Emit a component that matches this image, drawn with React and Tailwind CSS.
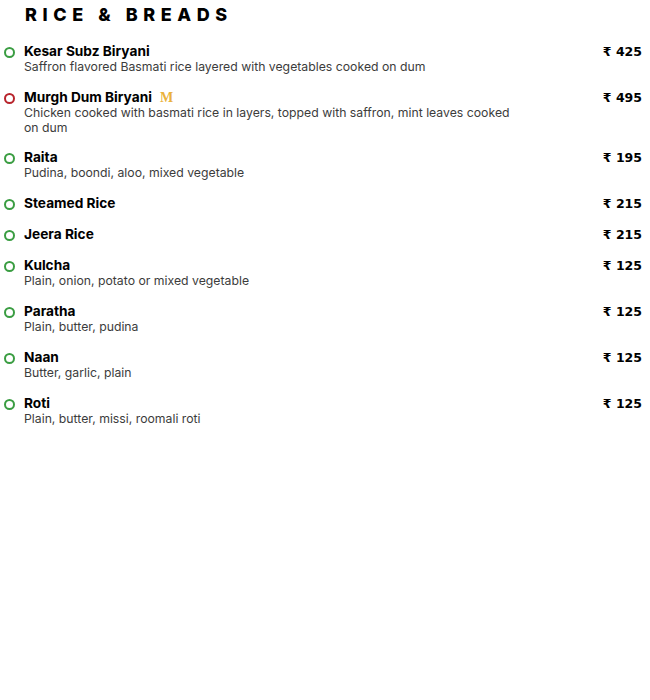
const items = [
  { name: 'Kesar Subz Biryani', desc: 'Saffron flavored Basmati rice layered with vegetables cooked on dum', price: '425' },
  { name: 'Murgh Dum Biryani', desc: 'Chicken cooked with basmati rice in layers, topped with saffron, mint leaves cooked on dum', price: '495', nonVeg: true, tag: 'M' },
  { name: 'Raita', desc: 'Pudina, boondi, aloo, mixed vegetable', price: '195' },
  { name: 'Steamed Rice', price: '215' },
  { name: 'Jeera Rice', price: '215' },
  { name: 'Kulcha', desc: 'Plain, onion, potato or mixed vegetable', price: '125' },
  { name: 'Paratha', desc: 'Plain, butter, pudina', price: '125' },
  { name: 'Naan', desc: 'Butter, garlic, plain', price: '125' },
  { name: 'Roti', desc: 'Plain, butter, missi, roomali roti', price: '125' },
]

const App = () => {
  return (
    <div className="w-[650px] h-[700px] bg-white pl-[4px] pr-[8px] pt-[5px] font-['Inter',sans-serif] text-black">
      <h1 className="ml-[21px] text-[18px] leading-[20px] font-extrabold tracking-[0.31em]">
        RICE &amp; BREADS
      </h1>
      <ul className="mt-[19px] flex flex-col gap-[16px]">
        {items.map((item) => (
          <li key={item.name} className={`flex items-start ${item.nonVeg ? '-mb-[1px]' : ''}`}>
            <span
              className={`mt-[3px] w-[11px] h-[11px] shrink-0 rounded-full border-2 ${
                item.nonVeg ? 'border-[#b8242c]' : 'border-[#3a9d42]'
              }`}
            />
            <div className="ml-[9px] w-[500px]">
              <div className="text-[13.7px] leading-[15px] font-bold flex items-center">
                {item.name}
                {item.tag && (
                  <span className="ml-[8px] font-['Liberation_Serif',serif] text-[14px] font-bold text-[#eab23c]">
                    {item.tag}
                  </span>
                )}
              </div>
              {item.desc && (
                <p className="text-[12.25px] leading-[15px] text-[#3c3c3c]">{item.desc}</p>
              )}
            </div>
            <div className="ml-auto text-[12.5px] leading-[15px] font-bold font-['DejaVu_Sans',sans-serif]">
              ₹ {item.price}
            </div>
          </li>
        ))}
      </ul>
    </div>
  )
}

export default App
